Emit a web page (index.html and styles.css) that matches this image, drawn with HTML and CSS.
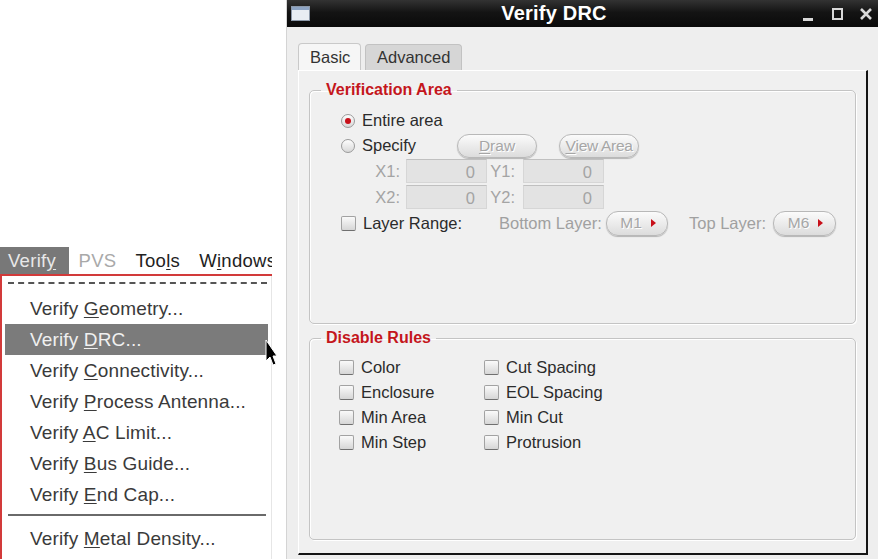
FILE: index.html
```html
<!DOCTYPE html>
<html lang="en">
<head>
    <meta charset="UTF-8">
    <title>Verify DRC</title>
    <link rel="stylesheet" href="styles.css">
</head>
<body>
    <div class="screen">
        <!-- 左边的菜单 -->
        <div class="menu-side">
            <div class="menubar">
                <span class="menubar-item active">Verif<u>y</u></span>
                <span class="menubar-item disabled">PVS</span>
                <span class="menubar-item">Too<u>l</u>s</span>
                <span class="menubar-item">W<u>i</u>ndows</span>
            </div>
            <div class="dropdown">
                <div class="tearoff"></div>
                <ul class="menu-list">
                    <li class="menu-item">Verify <u>G</u>eometry...</li>
                    <li class="menu-item active">Verify <u>D</u>RC...</li>
                    <li class="menu-item">Verify <u>C</u>onnectivity...</li>
                    <li class="menu-item">Verify <u>P</u>rocess Antenna...</li>
                    <li class="menu-item">Verify <u>A</u>C Limit...</li>
                    <li class="menu-item">Verify <u>B</u>us Guide...</li>
                    <li class="menu-item">Verify <u>E</u>nd Cap...</li>
                    <li class="menu-sep"></li>
                    <li class="menu-item">Verify <u>M</u>etal Density...</li>
                </ul>
            </div>
            <svg class="cursor" width="12" height="28" viewBox="0 0 12 28">
                <path d="M1 1 L1 22 L5 18 L8 26 L11 25 L8 17 L12 17 Z" fill="#000" stroke="#fff" stroke-width="1"/>
            </svg>
        </div>

        <!-- 对话框 -->
        <div class="window">
            <div class="titlebar">
                <svg class="win-icon" width="19" height="15" viewBox="0 0 19 15">
                    <rect x="0.5" y="0.5" width="18" height="14" fill="#e8edf3" stroke="#8c98a8"/>
                    <rect x="1" y="1" width="17" height="3" fill="#8da4c4"/>
                </svg>
                <div class="title">Verify DRC</div>
                <svg class="win-controls" width="78" height="27" viewBox="0 0 78 27">
                    <rect x="5" y="18" width="10" height="3" fill="#d8d8d8"/>
                    <rect x="35" y="9" width="9" height="10" fill="none" stroke="#d8d8d8" stroke-width="2"/>
                    <path d="M63 9 L73 19 M73 9 L63 19" stroke="#d8d8d8" stroke-width="2.6"/>
                </svg>
            </div>

            <div class="win-body">
                <div class="tabs">
                    <div class="tab basic">Basic</div>
                    <div class="tab adv">Advanced</div>
                </div>

                <div class="tab-panel">
                    <fieldset class="group area">
                        <legend>Verification Area</legend>
                        <div class="area-body">
                            <div class="row">
                                <span class="opt"><span class="radio checked"></span>Entire area</span>
                            </div>
                            <div class="row">
                                <span class="opt specify"><span class="radio"></span>Specify</span>
                                <span class="pill draw"><u>D</u>raw</span>
                                <span class="pill view"><u>V</u>iew Area</span>
                            </div>
                            <div class="row coords">
                                <span class="coord-label">X1:</span>
                                <span class="coord-input">0</span>
                                <span class="coord-label short">Y1:</span>
                                <span class="coord-input y">0</span>
                            </div>
                            <div class="row coords">
                                <span class="coord-label">X2:</span>
                                <span class="coord-input">0</span>
                                <span class="coord-label short">Y2:</span>
                                <span class="coord-input y">0</span>
                            </div>
                            <div class="row layer">
                                <span class="opt layer-range"><span class="check"></span>Layer Range:</span>
                                <span class="dim bottom-label">Bottom Layer:</span>
                                <span class="pill layer-btn m1">M1 <i class="arrow"></i></span>
                                <span class="dim top-label">Top Layer:</span>
                                <span class="pill layer-btn m6">M6 <i class="arrow"></i></span>
                            </div>
                        </div>
                    </fieldset>

                    <fieldset class="group rules">
                        <legend>Disable Rules</legend>
                        <div class="rules-body">
                            <span class="opt"><span class="check"></span>Color</span>
                            <span class="opt"><span class="check"></span>Cut Spacing</span>
                            <span class="opt"><span class="check"></span>Enclosure</span>
                            <span class="opt"><span class="check"></span>EOL Spacing</span>
                            <span class="opt"><span class="check"></span>Min Area</span>
                            <span class="opt"><span class="check"></span>Min Cut</span>
                            <span class="opt"><span class="check"></span>Min Step</span>
                            <span class="opt"><span class="check"></span>Protrusion</span>
                        </div>
                    </fieldset>
                </div>
            </div>
        </div>
    </div>
</body>
</html>
```

FILE: styles.css
```css
* {
    margin: 0;
    padding: 0;
    box-sizing: border-box;
}

body {
    width: 880px;
    height: 559px;
    overflow: hidden;
    background: #fff;
    font-family: "Liberation Sans", Arial, sans-serif;
    color: #2b2b2b;
}

u {
    text-decoration: underline;
    text-underline-offset: 2px;
}

.screen {
    display: flex;
    height: 559px;
}

/* 菜单 */

.menu-side {
    position: relative;
    width: 286px;
    padding-top: 247px;
}

.menubar {
    display: flex;
    width: 272px;
    height: 29px;
    border-bottom: 2px solid #d23a3a;
    font-size: 18.5px;
    overflow: hidden;
    white-space: nowrap;
}

.menubar-item {
    flex: none;
    height: 27px;
    line-height: 27px;
    padding: 0 9.5px;
    color: #222;
    letter-spacing: 0.3px;
}

.menubar-item.active {
    width: 69px;
    padding-left: 8px;
    background: #787878;
    color: #e8e8e8;
}

.menubar-item.disabled {
    color: #a9a9a9;
}

.dropdown {
    width: 272px;
    height: 283px;
    border-left: 2px solid #d23a3a;
    border-right: 1px solid #e6e6e6;
    padding: 6px 3px 0 3px;
}

.tearoff {
    height: 0;
    margin: 0 1px 0 3px;
    border-top: 2px dashed #555;
}

.menu-list {
    list-style: none;
    margin-top: 9px;
}

.menu-item {
    height: 31px;
    line-height: 31px;
    padding-left: 25px;
    font-size: 19px;
    color: #3a3a3a;
    letter-spacing: 0.15px;
    white-space: nowrap;
}

.menu-item.active {
    background: #7b7b7b;
    color: #f0f0f0;
}

.menu-sep {
    height: 2px;
    margin: 4px 2px 7px 3px;
    background: #6a6a6a;
}

.cursor {
    position: absolute;
    left: 265px;
    top: 339px;
}

/* 对话框 */

.window {
    display: flex;
    flex-direction: column;
    width: 592px;
    background: #eeeeee;
    border-left: 1px solid #d4d4d4;
}

.titlebar {
    display: flex;
    align-items: center;
    height: 27px;
    padding: 0 2px 0 4px;
    background: linear-gradient(#333, #141414 45%, #0a0a0a);
}

.win-icon {
    flex: none;
    margin-top: -1px;
}

.title {
    flex: 1;
    text-align: center;
    color: #fff;
    font-weight: bold;
    font-size: 20px;
    letter-spacing: 0.2px;
}

.win-controls {
    flex: none;
}

.win-body {
    flex: 1;
    padding: 16px 0 0 11px;
}

.tabs {
    display: flex;
    align-items: flex-end;
    gap: 4px;
    height: 27px;
}

.tab {
    height: 27px;
    line-height: 26px;
    font-size: 16.5px;
    color: #333;
    border: 1px solid #c9c9c9;
    border-bottom: none;
    border-radius: 4px 4px 0 0;
}

.tab.basic {
    width: 63px;
    padding-left: 11px;
    background: #f6f6f6;
}

.tab.adv {
    width: 97px;
    height: 26px;
    line-height: 25px;
    padding-left: 11px;
    background: #d6d6d6;
    border-color: #c2c2c2;
}

.tab-panel {
    display: flex;
    flex-direction: column;
    width: 570px;
    height: 485px;
    padding: 9px 10px 13px 10px;
    background: #f0f0f0;
    border-top: 1px solid #fff;
    border-left: 1px solid #fff;
    border-right: 2px solid #151515;
    border-bottom: 2px solid #151515;
}

.group {
    border: 1px solid #c4c4c4;
    border-radius: 5px;
    box-shadow: inset 1px 1px 0 #fff, 1px 1px 0 #fff;
    min-width: 0;
}

.group legend {
    margin-left: 11px;
    padding: 0 5px;
    line-height: 20px;
    font-size: 16px;
    font-weight: bold;
    color: #c4161c;
}

.group.area {
    flex: none;
    height: 244px;
}

.group.rules {
    flex: 1;
    margin-top: 4px;
}

.area-body {
    padding: 8px 0 0 31px;
}

.row {
    display: flex;
    align-items: center;
    height: 25px;
    font-size: 16.5px;
}

.row.coords {
    height: 26px;
}

.row.coords:first-of-type {
    margin-top: 1px;
}

.row.layer {
    height: 26px;
}

.opt {
    display: flex;
    align-items: center;
    gap: 7px;
    font-size: 16.5px;
    white-space: nowrap;
}

.opt.specify {
    width: 116px;
}

.opt.layer-range {
    width: 158px;
}

.radio {
    position: relative;
    width: 14px;
    height: 14px;
    border-radius: 50%;
    border: 1px solid #9a9a9a;
    background: linear-gradient(#fdfdfd, #d8d8d8);
}

.radio.checked::after {
    content: "";
    position: absolute;
    left: 3px;
    top: 3px;
    width: 6px;
    height: 6px;
    border-radius: 50%;
    background: #c8101a;
}

.check {
    flex: none;
    width: 15px;
    height: 15px;
    border: 1px solid #a2a2a2;
    border-bottom-color: #6f6f6f;
    border-radius: 2px;
    background: linear-gradient(#fafafa, #d6d6d6);
}

.pill {
    display: flex;
    align-items: center;
    justify-content: center;
    height: 24px;
    border-radius: 12px;
    border: 1px solid #b8b8b8;
    background: linear-gradient(#fbfbfb, #dcdcdc);
    box-shadow: 0 1px 1px rgba(0, 0, 0, 0.25);
    font-size: 15.5px;
    color: #a6a6a6;
    text-shadow: 1px 1px 0 #fff;
    white-space: nowrap;
}

.pill.draw {
    width: 80px;
}

.pill.view {
    width: 80px;
    margin-left: 22px;
    letter-spacing: -0.3px;
}

.coord-label {
    width: 59px;
    text-align: right;
    color: #a4a4a4;
}

.coord-label.short {
    width: 28px;
}

.coord-input {
    width: 81px;
    height: 24px;
    line-height: 24px;
    margin-left: 6px;
    padding-right: 11px;
    text-align: right;
    color: #a4a4a4;
    background: #e3e3e3;
    border: 1px solid #d6d6d6;
    border-top-color: #c0c0c0;
}

.coord-input.y {
    margin-left: 8px;
}

.dim {
    color: #a0a0a0;
    white-space: nowrap;
}

.bottom-label {
    width: 107px;
}

.top-label {
    width: 84px;
    margin-left: 21px;
}

.layer-btn {
    gap: 9px;
    height: 25px;
    padding-left: 2px;
}

.layer-btn.m1 {
    width: 62px;
}

.layer-btn.m6 {
    width: 63px;
}

.arrow {
    width: 0;
    height: 0;
    border-top: 4px solid transparent;
    border-bottom: 4px solid transparent;
    border-left: 5px solid #c8101a;
}

.rules-body {
    display: grid;
    grid-template-columns: 145px 1fr;
    grid-auto-rows: 25px;
    align-items: center;
    padding: 7px 0 0 29px;
}
```
